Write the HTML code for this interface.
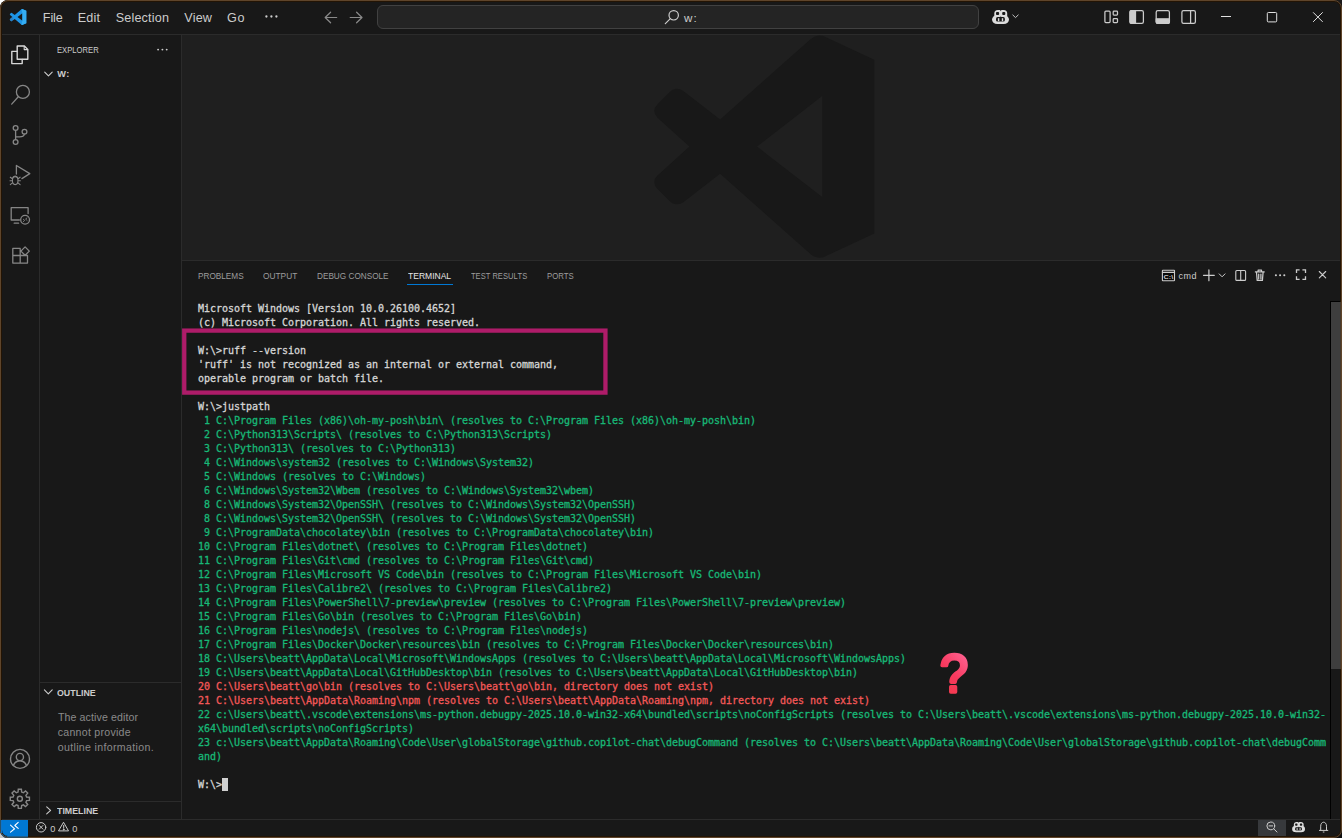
<!DOCTYPE html>
<html lang="en">
<head>
<meta charset="utf-8">
<title>w: - Visual Studio Code</title>
<style>
html,body{margin:0;padding:0;}
body{width:1342px;height:838px;overflow:hidden;background:#111;position:relative;font-family:"Liberation Sans", sans-serif;font-kerning:none;-webkit-font-smoothing:antialiased;}
.abs{position:absolute;}
.t{position:absolute;white-space:pre;line-height:20px;height:20px;font-kerning:none;}
.corner{position:absolute;width:12px;height:12px;}
#win{position:absolute;left:0;top:0;width:1342px;height:838px;border-radius:8px;overflow:hidden;background:#181818;}
#frame{position:absolute;left:0;top:0;width:1342px;height:838px;box-sizing:border-box;border:1px solid #5f452b;border-radius:8px;pointer-events:none;}
#frame2{position:absolute;left:1px;top:1px;width:1340px;height:836px;box-sizing:border-box;border:1px solid #231404;border-radius:7px;pointer-events:none;}
.hl{position:absolute;height:1px;background:#2b2b2b;}
.vl{position:absolute;width:1px;background:#2b2b2b;}
#editor{position:absolute;left:182px;top:35px;width:1160px;height:225px;background:#1f1f1f;overflow:hidden;}
#cc{position:absolute;left:377px;top:5px;width:602px;height:24px;box-sizing:border-box;border:1px solid #414141;border-radius:6px;background:#242424;}
#term{position:absolute;left:198px;top:301.5px;margin:0;font-family:"DejaVu Sans Mono","Liberation Mono",monospace;font-size:10px;letter-spacing:-0.0205px;line-height:14px;color:#d6d6d6;white-space:pre;font-kerning:none;-webkit-text-stroke:0.3px currentColor;}
#term .g{color:#17b877;} #term .r{color:#f45858;}
svg{position:absolute;overflow:visible;}
</style>
</head>
<body>
<div class="corner" style="left:0;top:0;background:#fff"></div>
<div class="corner" style="right:0;top:0;background:#1c1a1a"></div>
<div class="corner" style="left:0;bottom:0;background:#c9c9c9"></div>
<div class="corner" style="right:0;bottom:0;background:#0e0e0e"></div>
<div id="win">

<div id="titlebar" class="abs" style="left:0;top:0;width:1342px;height:34px;background:#181818;">
<div id="menubar">
<span class="t" style="left:42.77px;top:8.00px;font-size:12.6px;letter-spacing:-0.070px;color:#ccc;">File</span>
<span class="t" style="left:77.72px;top:8.00px;font-size:12.6px;letter-spacing:0.221px;color:#ccc;">Edit</span>
<span class="t" style="left:115.68px;top:8.00px;font-size:12.6px;letter-spacing:0.176px;color:#ccc;">Selection</span>
<span class="t" style="left:184.34px;top:8.00px;font-size:12.6px;letter-spacing:0.071px;color:#ccc;">View</span>
<span class="t" style="left:227.12px;top:8.00px;font-size:12.6px;letter-spacing:0.605px;color:#ccc;">Go</span>
</div>
<div id="cc"></div>
<span class="t" style="left:684.02px;top:7.50px;font-size:11.6px;letter-spacing:1.042px;color:#ccc;">w:</span>
</div>
<div class="hl" style="left:0;top:34px;width:1342px;"></div>
<div id="activitybar" class="abs" style="left:0;top:35px;width:39px;height:784px;background:#181818;"></div>
<div class="vl" style="left:39px;top:35px;height:784px;"></div>
<div id="sidebar" class="abs" style="left:40px;top:35px;width:141px;height:784px;background:#181818;">
</div>
<span class="t" style="left:56.57px;top:39.50px;font-size:9.4px;color:#ccc;transform-origin:0 0;transform:scaleX(0.8162);">EXPLORER</span>
<span class="t" style="left:57.19px;top:64.00px;font-size:9.2px;letter-spacing:0.347px;color:#ccc;font-weight:700;">W:</span>
<div class="hl" style="left:40px;top:682px;width:141px;"></div>
<span class="t" style="left:56.74px;top:683.00px;font-size:9.2px;color:#ccc;transform-origin:0 0;transform:scaleX(0.9612);font-weight:700;">OUTLINE</span>
<span class="t" style="left:57.96px;top:707.00px;font-size:10.6px;letter-spacing:0.110px;color:#8a8a8a;">The active editor</span>
<span class="t" style="left:57.75px;top:721.50px;font-size:10.6px;letter-spacing:0.260px;color:#8a8a8a;">cannot provide</span>
<span class="t" style="left:57.75px;top:736.50px;font-size:10.6px;letter-spacing:0.334px;color:#8a8a8a;">outline information.</span>
<div class="hl" style="left:40px;top:801px;width:141px;"></div>
<span class="t" style="left:57.10px;top:801.00px;font-size:9.2px;color:#ccc;transform-origin:0 0;transform:scaleX(0.9607);font-weight:700;">TIMELINE</span>
<div class="vl" style="left:181px;top:35px;height:784px;"></div>
<div id="editor"></div>
<div id="panel" class="abs" style="left:182px;top:261px;width:1160px;height:558px;background:#181818;"></div>
<div class="hl" style="left:182px;top:260px;width:1160px;"></div>
<span class="t" style="left:197.82px;top:265.50px;font-size:9.4px;color:#9d9d9d;transform-origin:0 0;transform:scaleX(0.8769);">PROBLEMS</span>
<span class="t" style="left:262.60px;top:265.50px;font-size:9.4px;color:#9d9d9d;transform-origin:0 0;transform:scaleX(0.8886);">OUTPUT</span>
<span class="t" style="left:317.08px;top:265.50px;font-size:9.4px;color:#9d9d9d;transform-origin:0 0;transform:scaleX(0.8753);">DEBUG CONSOLE</span>
<span class="t" style="left:408.31px;top:265.50px;font-size:9.4px;color:#e7e7e7;transform-origin:0 0;transform:scaleX(0.9095);">TERMINAL</span>
<span class="t" style="left:470.83px;top:265.50px;font-size:9.4px;color:#9d9d9d;transform-origin:0 0;transform:scaleX(0.8061);">TEST RESULTS</span>
<span class="t" style="left:546.61px;top:265.50px;font-size:9.4px;color:#9d9d9d;transform-origin:0 0;transform:scaleX(0.8291);">PORTS</span>
<div class="abs" style="left:407px;top:284px;width:46px;height:1px;background:#0078d4;"></div>
<span class="t" style="left:1178.52px;top:266.00px;font-size:9.0px;letter-spacing:0.480px;color:#ccc;">cmd</span>
<pre id="term">
Microsoft Windows [Version 10.0.26100.4652]
(c) Microsoft Corporation. All rights reserved.

W:\&gt;ruff --version
&#x27;ruff&#x27; is not recognized as an internal or external command,
operable program or batch file.

W:\&gt;justpath
<span class="g"> 1 C:\Program Files (x86)\oh-my-posh\bin\ (resolves to C:\Program Files (x86)\oh-my-posh\bin)</span>
<span class="g"> 2 C:\Python313\Scripts\ (resolves to C:\Python313\Scripts)</span>
<span class="g"> 3 C:\Python313\ (resolves to C:\Python313)</span>
<span class="g"> 4 C:\Windows\system32 (resolves to C:\Windows\System32)</span>
<span class="g"> 5 C:\Windows (resolves to C:\Windows)</span>
<span class="g"> 6 C:\Windows\System32\Wbem (resolves to C:\Windows\System32\wbem)</span>
<span class="g"> 8 C:\Windows\System32\OpenSSH\ (resolves to C:\Windows\System32\OpenSSH)</span>
<span class="g"> 8 C:\Windows\System32\OpenSSH\ (resolves to C:\Windows\System32\OpenSSH)</span>
<span class="g"> 9 C:\ProgramData\chocolatey\bin (resolves to C:\ProgramData\chocolatey\bin)</span>
<span class="g">10 C:\Program Files\dotnet\ (resolves to C:\Program Files\dotnet)</span>
<span class="g">11 C:\Program Files\Git\cmd (resolves to C:\Program Files\Git\cmd)</span>
<span class="g">12 C:\Program Files\Microsoft VS Code\bin (resolves to C:\Program Files\Microsoft VS Code\bin)</span>
<span class="g">13 C:\Program Files\Calibre2\ (resolves to C:\Program Files\Calibre2)</span>
<span class="g">14 C:\Program Files\PowerShell\7-preview\preview (resolves to C:\Program Files\PowerShell\7-preview\preview)</span>
<span class="g">15 C:\Program Files\Go\bin (resolves to C:\Program Files\Go\bin)</span>
<span class="g">16 C:\Program Files\nodejs\ (resolves to C:\Program Files\nodejs)</span>
<span class="g">17 C:\Program Files\Docker\Docker\resources\bin (resolves to C:\Program Files\Docker\Docker\resources\bin)</span>
<span class="g">18 C:\Users\beatt\AppData\Local\Microsoft\WindowsApps (resolves to C:\Users\beatt\AppData\Local\Microsoft\WindowsApps)</span>
<span class="g">19 C:\Users\beatt\AppData\Local\GitHubDesktop\bin (resolves to C:\Users\beatt\AppData\Local\GitHubDesktop\bin)</span>
<span class="r">20 C:\Users\beatt\go\bin (resolves to C:\Users\beatt\go\bin, directory does not exist)</span>
<span class="r">21 C:\Users\beatt\AppData\Roaming\npm (resolves to C:\Users\beatt\AppData\Roaming\npm, directory does not exist)</span>
<span class="g">22 c:\Users\beatt\.vscode\extensions\ms-python.debugpy-2025.10.0-win32-x64\bundled\scripts\noConfigScripts (resolves to C:\Users\beatt\.vscode\extensions\ms-python.debugpy-2025.10.0-win32-</span>
<span class="g">x64\bundled\scripts\noConfigScripts)</span>
<span class="g">23 c:\Users\beatt\AppData\Roaming\Code\User\globalStorage\github.copilot-chat\debugCommand (resolves to C:\Users\beatt\AppData\Roaming\Code\User\globalStorage\github.copilot-chat\debugComm</span>
<span class="g">and)</span>

W:\&gt;
</pre>
<div class="abs" style="left:222px;top:778px;width:6px;height:13px;background:#d0d0d0;"></div>
<svg style="left:0;top:0" width="1342" height="838"><rect x="184.25" y="330.6" width="421.2" height="62" fill="none" stroke="#ae1c69" stroke-width="4.3"/></svg>
<div class="abs" style="left:1330px;top:301px;width:1px;height:518px;background:#000;"></div>
<div class="abs" style="left:1330px;top:301px;width:11px;height:1px;background:#000;"></div>
<div class="abs" style="left:1331px;top:302px;width:9px;height:367px;background:#3e3e3e;"></div>
<div id="statusbar" class="abs" style="left:0;top:820px;width:1342px;height:18px;background:#181818;">
<div class="abs" style="left:0;top:0;width:28px;height:18px;background:#0078d4;"></div>
<div class="abs" style="left:1258px;top:0;width:28px;height:18px;background:#37393c;"></div>
</div>
<div class="hl" style="left:0;top:819px;width:1342px;"></div>
<span class="t" style="left:50.14px;top:819.00px;font-size:9.2px;letter-spacing:0.000px;color:#ccc;">0</span>
<span class="t" style="left:72.24px;top:819.00px;font-size:9.2px;letter-spacing:0.000px;color:#ccc;">0</span>
<svg id="icons" style="left:0;top:0" width="1342" height="838" viewBox="0 0 1342 838" fill="none" stroke-linecap="round" stroke-linejoin="round">
<path id="watermark" d="M810.5,39.3 Q818.5,32.5 827,37.8 L874.3,59.8 L874.3,233.4 L827,255.4 Q818.5,260.7 810.5,253.9 L720.1,173.8 L683,202.5 Q675.5,207 669,200.5 L657.5,189 Q651,182 657.5,175.5 L689.4,146.6 L657.5,117.7 Q651,111.2 657.5,104.2 L669,92.7 Q675.5,86.2 683,90.7 L720.1,119.4 Z M822.2,96.1 L757,146.6 L822.2,197.1 Z" fill="#181818" fill-rule="evenodd" stroke="none"/>
<g id="logo" transform="translate(9.8,9) scale(0.0751,0.0721) translate(-654.5,-35.6)" stroke="none">
<path d="M810.5,39.3 Q818.5,32.5 827,37.8 L874.3,59.8 L874.3,233.4 L827,255.4 Q818.5,260.7 810.5,253.9 L720.1,173.8 L683,202.5 Q675.5,207 669,200.5 L657.5,189 Q651,182 657.5,175.5 L689.4,146.6 L657.5,117.7 Q651,111.2 657.5,104.2 L669,92.7 Q675.5,86.2 683,90.7 L720.1,119.4 Z M822.2,96.1 L757,146.6 L822.2,197.1 Z" fill="#1d95e8" fill-rule="evenodd"/>
<path d="M703,159 L683,202.5 Q675.5,207 669,200.5 L657.5,189 Q651,182 657.5,175.5 L689.4,146.6 Z" fill="#2a80c6"/>
<path d="M810.5,39.3 Q818.5,32.5 827,37.8 L874.3,59.8 L874.3,233.4 L827,255.4 Q818.5,260.7 810.5,253.9 L822.2,197.1 L822.2,96.1 Z" fill="#35adf2"/>
</g>
<g id="menu-more" fill="#ccc" stroke="none"><circle cx="266.4" cy="16.5" r="1.15"/><circle cx="271.4" cy="16.5" r="1.15"/><circle cx="276.4" cy="16.5" r="1.15"/></g>
<g id="nav" stroke="#8a8a8a" stroke-width="1.2"><path d="M336.7,17.5 H325.2 M330.6,12.2 L325.2,17.5 L330.6,22.8"/><path d="M350.2,17.5 H362 M356.6,12.2 L362,17.5 L356.6,22.8"/></g>
<g id="cc-search" stroke="#ccc" stroke-width="1.2"><circle cx="673.7" cy="15.3" r="4.7"/><path d="M670.3,18.7 L665.3,23.7"/></g>
<g id="copilot-title"><g transform="translate(992,9.9) scale(1,1)" stroke="none"><rect x="2.3" y="0" width="12.9" height="9" rx="3.6" fill="#dcdcdc"/><rect x="0" y="5.2" width="17" height="8.9" rx="5.2" ry="4.4" fill="#dcdcdc"/><rect x="4" y="2.1" width="3.1" height="2.9" rx="0.9" fill="#181818"/><rect x="10.2" y="2.1" width="3.1" height="2.9" rx="0.9" fill="#181818"/><path d="M7.9,-0.2 H9.6 L8.75,1.3 Z" fill="#181818"/><rect x="8.35" y="6.6" width="0.8" height="1.6" fill="#181818"/><rect x="4" y="7.2" width="8.9" height="4.4" rx="1.6" fill="#181818"/><rect x="5.9" y="8.3" width="1.4" height="3" fill="#dcdcdc"/><rect x="9.8" y="8.3" width="1.4" height="3" fill="#dcdcdc"/></g><path d="M1012.8,15 L1015.5,17.6 L1018.2,15" stroke="#ccc" stroke-width="0.95"/></g>
<g id="layout" stroke="#ccc" stroke-width="1.25">
<rect x="1104.9" y="11.1" width="5.2" height="11.5" rx="1"/><rect x="1113.2" y="11.1" width="4.3" height="4" rx="0.8"/><rect x="1113.2" y="18.6" width="4.3" height="4" rx="0.8"/>
<rect x="1130" y="10.6" width="13.4" height="12.8" rx="1.6"/><path d="M1130,12 a1.4,1.4 0 0 1 1.4,-1.4 H1135.5 V23.4 H1131.4 a1.4,1.4 0 0 1 -1.4,-1.4 Z" fill="#ccc"/>
<rect x="1156.2" y="10.6" width="13.2" height="12.8" rx="1.6"/><path d="M1156.2,18.8 H1169.4 V22 a1.4,1.4 0 0 1 -1.4,1.4 H1157.6 a1.4,1.4 0 0 1 -1.4,-1.4 Z" fill="#ccc"/>
<rect x="1181.9" y="10.6" width="13.5" height="12.8" rx="1.6"/><path d="M1190.6,10.6 V23.4"/>
</g>
<g id="winctl" stroke="#e0e0e0" stroke-width="1" stroke-linecap="butt"><path d="M1221,16.5 H1231"/><rect x="1267.3" y="12.5" width="9.4" height="9.4" rx="1"/><path d="M1313.1,12.3 L1322.7,21.9 M1322.7,12.3 L1313.1,21.9"/></g>
<g id="act-files" stroke="#d7d7d7" stroke-width="1.4"><path d="M17.2,46 H24.4 L27.8,49.4 V59.2 H17.2 Z"/><path d="M24.2,46.2 V49.6 H27.6" stroke-width="1.1"/><path d="M17,51.4 H11.8 V63.6 H22.2 V59.4"/></g>
<g id="act" stroke="#868686" stroke-width="1.3">
<circle cx="22.9" cy="91.9" r="6.5"/><path d="M18.3,96.7 L11.7,104.1"/>
<circle cx="15.6" cy="128" r="2.4"/><circle cx="15.6" cy="142" r="2.4"/><circle cx="24.5" cy="131.7" r="2.4"/><path d="M15.6,130.5 V139.5 M24.4,134.2 Q23.8,136.9 19.6,136.9 H15.8"/>
<path d="M16.4,174 V165.5 L29.8,173.6 L21.9,178.6"/>
<g stroke-width="1.1"><ellipse cx="15.2" cy="180.6" rx="2.8" ry="4"/><path d="M12.9,177.4 Q15.2,174.6 17.5,177.4 M12.4,178.7 L10.3,177.2 M12.3,180.8 H10 M12.4,182.9 L10.3,184.6 M18,178.7 L20.1,177.2 M18.1,180.8 H20.4 M18,182.9 L20.1,184.6"/></g>
<path d="M28.1,213.6 V207.7 H11.2 V220 H19.4 M14.2,223.2 H18.6"/><circle cx="25.1" cy="219.8" r="4.4"/><path d="M23.3,219.2 L24.7,220.4 L23.3,221.6 M27,217.9 L25.6,219.1 L27,220.3" stroke-width="0.9"/>
<path d="M12.8,248.4 H20.2 V263.1 H12.8 Z M12.8,255.5 H27.5 V263.1 H20.2 M25.1,246.9 L29.3,251.1 L25.1,255.3 L20.9,251.1 Z" stroke-linejoin="round"/>
<g stroke-width="1.4"><circle cx="20" cy="758.9" r="9.5"/><circle cx="19.9" cy="757" r="3.6"/><path d="M13.3,765.6 C14.6,762.2 17,760.8 19.9,760.8 C22.8,760.8 25.2,762.2 26.5,765.6"/>
<path d="M18.05,792.04 L18.30,789.22 L21.40,789.22 L21.65,792.04 L23.36,792.74 L25.53,790.94 L27.71,793.12 L25.91,795.29 L26.61,797.00 L29.43,797.25 L29.43,800.35 L26.61,800.60 L25.91,802.31 L27.71,804.48 L25.53,806.66 L23.36,804.86 L21.65,805.56 L21.40,808.38 L18.30,808.38 L18.05,805.56 L16.34,804.86 L14.17,806.66 L11.99,804.48 L13.79,802.31 L13.09,800.60 L10.27,800.35 L10.27,797.25 L13.09,797.00 L13.79,795.29 L11.99,793.12 L14.17,790.94 L16.34,792.74Z" stroke-linejoin="miter"/><circle cx="19.85" cy="798.8" r="2.5"/></g>
</g>
<g id="side-glyphs" stroke="#ccc" stroke-width="1.1"><path d="M44.7,72.1 L48.45,75.9 L52.2,72.1"/><path d="M44.4,689.9 L48.3,693.8 L52.2,689.9"/><path d="M46.7,806.8 L50.6,810.3 L46.7,813.9"/></g>
<g id="side-more" fill="#ccc" stroke="none"><circle cx="158.1" cy="49.6" r="0.95"/><circle cx="162.4" cy="49.6" r="0.95"/><circle cx="166.7" cy="49.6" r="0.95"/></g>
<g id="panel-actions" stroke="#ccc" stroke-width="1.1">
<rect x="1162.9" y="272.4" width="11" height="7.8" fill="#0a0a0a" stroke="none"/><rect x="1162.4" y="270.3" width="12.1" height="10.5" rx="0.5"/><path d="M1162.4,272.4 H1174.5"/>
<path d="M1203.5,275.3 H1214.3 M1208.9,269.9 V280.7" stroke-width="1.2"/>
<path d="M1219.2,273.9 L1222.1,276.8 L1225,273.9" stroke-width="1"/>
<rect x="1235.8" y="270.5" width="9.8" height="9.9" rx="1"/><path d="M1240.7,270.5 V280.4"/>
<path d="M1255.4,271.9 H1264.2 M1258.1,271.7 V270.2 H1261.5 V271.7 M1256.5,272.3 L1257.2,280.4 H1262.4 L1263.1,272.3 M1258.7,274 V278.8 M1260.9,274 V278.8" stroke-width="1.25"/>
<g fill="#ccc" stroke="none"><circle cx="1275.9" cy="275.3" r="1.05"/><circle cx="1280.1" cy="275.3" r="1.05"/><circle cx="1284.3" cy="275.3" r="1.05"/></g>
<path d="M1296.5,273 V269.9 H1299.6 M1302.4,269.9 H1305.5 V273 M1305.5,276.3 V279.4 H1302.4 M1299.6,279.4 H1296.5 V276.3" stroke-width="1.3" stroke-linecap="butt" stroke-linejoin="miter"/>
<path d="M1319.3,271.5 L1325.7,277.9 M1325.7,271.5 L1319.3,277.9"/>
</g>
<text id="cmd-glyph" x="1163.6" y="278.9" font-family="Liberation Sans, sans-serif" font-size="5.6" font-weight="700" fill="#ccc" stroke="none" textLength="9.6" lengthAdjust="spacingAndGlyphs">C:\</text>
<g id="status-icons" stroke="#fff" stroke-width="1.1"><path d="M10.5,825.2 L14.6,828.8 L10.5,832.1 M18.2,822.4 L14.8,825.5 L18.2,828.3"/></g>
<g id="status-problems" stroke="#ccc" stroke-width="1"><circle cx="41.1" cy="827.3" r="4.7"/><path d="M39.3,825.5 L42.9,829.1 M42.9,825.5 L39.3,829.1"/><path d="M63.7,822.6 L68.5,830.9 H58.9 Z M63.7,825.4 V828.2"/><circle cx="63.7" cy="829.6" r="0.4"/></g>
<g id="status-right" stroke="#ccc" stroke-width="1"><circle cx="1270.8" cy="825.9" r="3.9"/><path d="M1269,825.9 H1272.6 M1273.7,828.8 L1277,832"/>
<path d="M1320.7,830.2 V826.2 C1320.7,820.9 1326.5,820.9 1326.5,826.2 V830.2 M1319.4,830.4 H1327.8 M1323.2,832 H1324"/></g>
<g id="copilot-status"><g transform="translate(1292.1,822) scale(0.76,0.73)" stroke="none"><rect x="2.3" y="0" width="12.9" height="9" rx="3.6" fill="#dcdcdc"/><rect x="0" y="5.2" width="17" height="8.9" rx="5.2" ry="4.4" fill="#dcdcdc"/><rect x="4" y="2.1" width="3.1" height="2.9" rx="0.9" fill="#181818"/><rect x="10.2" y="2.1" width="3.1" height="2.9" rx="0.9" fill="#181818"/><path d="M7.9,-0.2 H9.6 L8.75,1.3 Z" fill="#181818"/><rect x="8.35" y="6.6" width="0.8" height="1.6" fill="#181818"/><rect x="4" y="7.2" width="8.9" height="4.4" rx="1.6" fill="#181818"/><rect x="5.9" y="8.3" width="1.4" height="3" fill="#dcdcdc"/><rect x="9.8" y="8.3" width="1.4" height="3" fill="#dcdcdc"/></g></g>
<defs><linearGradient id="qg" x1="0.8" y1="0" x2="0.3" y2="1"><stop offset="0" stop-color="#ff6b9d"/><stop offset="0.55" stop-color="#f8395e"/><stop offset="1" stop-color="#f23a48"/></linearGradient></defs>
<text id="qmark" transform="translate(954,691.5) scale(0.95,1)" x="0" y="0" text-anchor="middle" font-family="Liberation Sans, sans-serif" font-weight="400" font-size="53" fill="url(#qg)" stroke="url(#qg)" stroke-width="3.6" stroke-linejoin="round">?</text>
</svg>
</div>
<div id="frame2"></div>
<div id="frame"></div>
<div class="abs" style="left:1340px;top:302px;width:1px;height:367px;background:#463a2f;"></div>
<div class="abs" style="left:0;top:820px;width:1px;height:10px;background:#24536e;"></div>
<div class="abs" style="left:1px;top:820px;width:1px;height:13px;background:#1173c6;"></div>
<div class="abs" style="left:7px;top:836px;width:21px;height:1px;background:#1f5f8f;"></div>
<div class="abs" style="left:8px;top:837px;width:20px;height:1px;background:#2f4f5f;"></div>
</body></html>
